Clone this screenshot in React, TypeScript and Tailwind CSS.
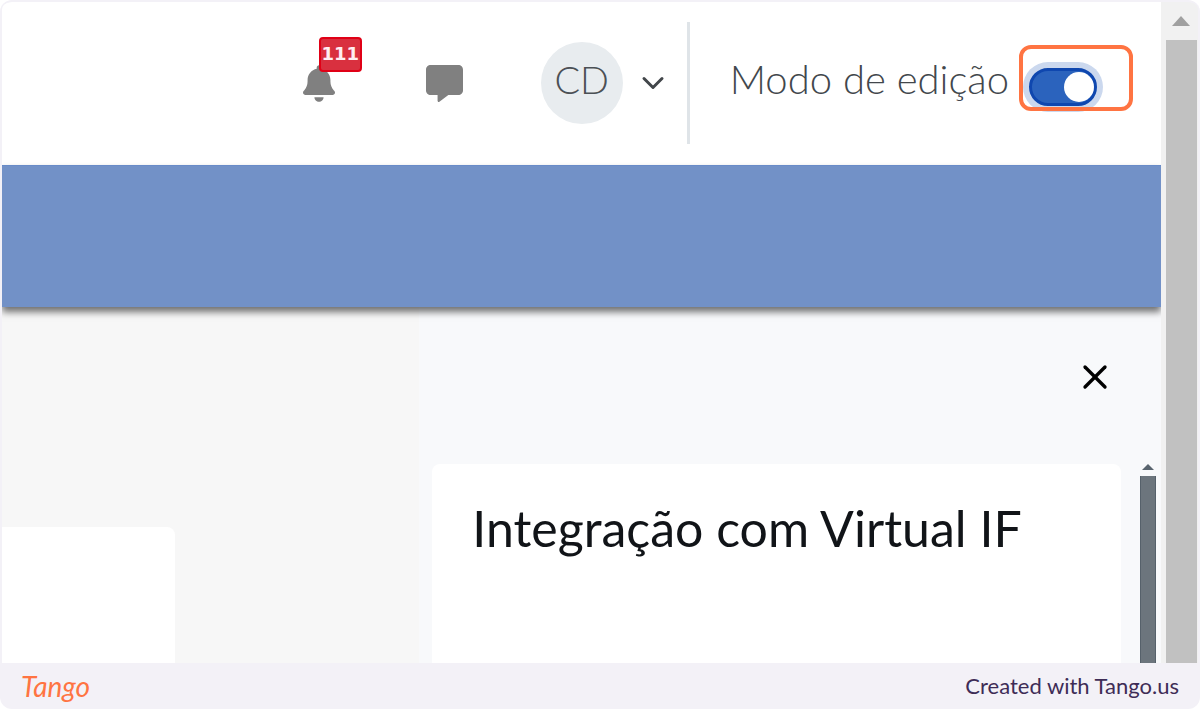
import { useState } from "react";
import { FaBell, FaMessage } from "react-icons/fa6";
import { ChevronDown, X } from "lucide-react";

function TopBar() {
  const [editMode, setEditMode] = useState(true);

  return (
    <header className="flex h-[163px] shrink-0 items-center justify-end bg-white pr-16 pb-px">
      {/* Notifications */}
      <button aria-label="Notificações" className="relative mr-[91px] text-[#808080]">
        <FaBell className="h-[37px] w-8" />
        <span className="absolute -top-7 left-4 flex h-[35px] w-[43px] items-center justify-center rounded-sm border-2 border-[#e00016] bg-[#d9303f] font-['DejaVu_Sans'] text-lg font-bold text-[#ffeef2]">
          111
        </span>
      </button>

      <button aria-label="Mensagens" className="mr-[78px] text-[#808080]">
        <FaMessage className="size-[37px]" />
      </button>

      {/* User menu */}
      <button aria-label="Menu do usuário" className="mr-4 flex items-center gap-3 text-[#4b5055]">
        <span className="flex size-[82px] items-center justify-center rounded-full bg-[#e8ecef] pb-2 text-[38px] font-light">
          CD
        </span>
        <ChevronDown size={36} strokeWidth={2} className="text-[#42464a]" />
      </button>

      {/* Edit mode */}
      <div className="flex h-[122px] items-center gap-5 border-l-[3px] border-[#dfe4e8] pl-10">
        <label htmlFor="edit-mode" className="pb-2 text-[40px] leading-none font-light whitespace-nowrap text-[#42474c]">
          Modo de edição
        </label>
        <div className="relative flex pt-2">
          <input
            id="edit-mode"
            type="checkbox"
            role="switch"
            checked={editMode}
            onChange={(e) => setEditMode(e.target.checked)}
            className="flex h-[38px] w-[68px] cursor-pointer appearance-none items-center rounded-full border-[3px] border-[#0f47af] bg-slate-300 ring-6 ring-[#cbd8ee] before:size-[30px] before:rounded-full before:bg-white checked:justify-end checked:bg-[#2b63bd]"
          />
          <div className="pointer-events-none absolute -top-[15px] -right-9 -left-[10px] h-[66px] rounded-xl border-4 border-[#ff7442]" />
        </div>
      </div>
    </header>
  );
}

function BlockDrawer() {
  return (
    <aside className="flex w-[64%] flex-col bg-[#f8f9fb] pl-[13px]">
      <div className="flex justify-end pt-12 pr-11 pb-[65px]">
        <button aria-label="Fechar" className="p-0.5 text-black">
          <X size={40} strokeWidth={2} />
        </button>
      </div>
      <div className="flex flex-1">
        <section className="flex-1 rounded-t-lg bg-white px-10 pt-8">
          <h2 className="text-[50px] leading-[64px] font-normal whitespace-nowrap text-[#111418]">
            Integração com Virtual IF
          </h2>
        </section>
        <div className="mr-[5px] ml-[19px] flex w-4 flex-col items-center">
          <svg viewBox="0 0 12 6" className="mb-1.5 h-[6px] w-3" fill="#59646e">
            <path d="M6 0 12 6H0Z" />
          </svg>
          <div className="w-full flex-1 border-x border-[#56616b] bg-[#6c757d]" />
        </div>
      </div>
    </aside>
  );
}

export default function App() {
  return (
    <div className="flex min-h-screen flex-col overflow-hidden rounded-xl border-t-2 border-[#f3f1f7] bg-[#f3f1f7] font-[Lato,sans-serif]">
      <div className="mx-[2px] flex flex-1 overflow-hidden rounded-t-lg">
        <main className="flex min-w-0 flex-1 flex-col overflow-hidden">
          <TopBar />
          <div className="relative h-[142px] shrink-0 border-t border-[#688bc8] bg-[#7291c7] shadow-[0_5px_7px_rgba(0,0,0,0.55)]" />
          <div className="flex flex-1 bg-[#f7f7f7]">
            <div className="flex-1 pt-[220px]">
              <div className="h-full w-[173px] rounded-tr-lg bg-white" />
            </div>
            <BlockDrawer />
          </div>
        </main>

        {/* Page scrollbar */}
        <div className="flex w-[37px] flex-col items-center bg-[#f1f1f1] pt-[14px] pl-[3px]">
          <svg viewBox="0 0 18 10" className="mb-[14px] h-[10px] w-[18px]" fill="#a0a0a0">
            <path d="M9 0 18 10H0Z" />
          </svg>
          <div className="w-[31px] flex-1 bg-[#c1c1c1]" />
        </div>
      </div>

      <footer className="flex h-[46px] items-center justify-between px-[21px]">
        <a href="#tango" className="text-[28px] leading-none font-normal text-[#ff7442] italic">
          Tango
        </a>
        <p className="text-[22px] leading-none text-[#3e2c56]">Created with Tango.us</p>
      </footer>
    </div>
  );
}
